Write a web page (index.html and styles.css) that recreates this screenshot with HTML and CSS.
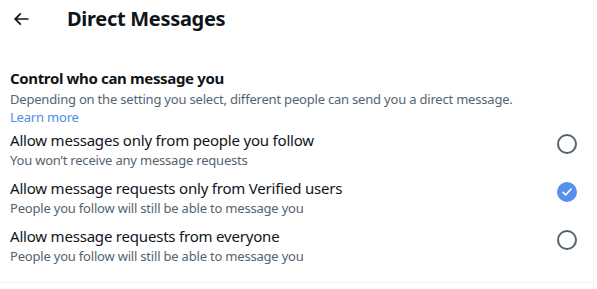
FILE: index.html
```html
<!DOCTYPE html>
<html lang="en">
<head>
<meta charset="utf-8">
<title>Direct Messages</title>
<link rel="stylesheet" href="styles.css">
</head>
<body>
<main class="panel">
  <header class="topbar">
    <button class="back" aria-label="Back">
      <svg viewBox="0 0 24 24" width="20" height="20"><path d="M7.414 13l5.043 5.04-1.414 1.42L3.586 12l7.457-7.46 1.414 1.42L7.414 11H21v2H7.414z"/></svg>
    </button>
    <h1 class="title">Direct Messages</h1>
  </header>
  <section class="section">
    <h2 class="heading">Control who can message you</h2>
    <p class="desc">Depending on the setting you select, different people can send you a direct message.</p>
    <div class="learn"><a class="link" href="#">Learn more</a></div>
    <ul class="options">
      <li class="option">
        <div class="option-text">
          <div class="option-title">Allow messages only from people you follow</div>
          <div class="option-sub">You won’t receive any message requests</div>
        </div>
        <span class="radio"></span>
      </li>
      <li class="option">
        <div class="option-text">
          <div class="option-title">Allow message requests only from Verified users</div>
          <div class="option-sub">People you follow will still be able to message you</div>
        </div>
        <span class="radio checked">
          <svg viewBox="0 0 20 20" width="20" height="20"><path d="M6 10.3l2.6 2.6L14.2 7" fill="none" stroke="#fff" stroke-width="1.6" stroke-linecap="round" stroke-linejoin="round"/></svg>
        </span>
      </li>
      <li class="option">
        <div class="option-text">
          <div class="option-title">Allow message requests from everyone</div>
          <div class="option-sub">People you follow will still be able to message you</div>
        </div>
        <span class="radio"></span>
      </li>
    </ul>
  </section>
</main>
</body>
</html>
```
FILE: styles.css
```css
* { box-sizing: border-box; }
html, body { margin: 0; padding: 0; background: #fff; }
body {
  font-family: "Noto Sans", "Open Sans", "Liberation Sans", sans-serif;
  color: #0f1419;
}
.panel {
  width: 594px;
  height: 289px;
  border-right: 1px solid #eff3f4;
}
.topbar {
  display: flex;
  align-items: center;
  height: 38px;
  padding: 0 0 0 11px;
}
.back {
  display: flex;
  align-items: center;
  justify-content: center;
  width: 20px;
  height: 20px;
  padding: 0;
  border: 0;
  background: none;
  margin-right: 36px;
}
.back svg { fill: #0f1419; }
.title {
  margin: 0;
  font-size: 20px;
  font-weight: 700;
  line-height: 24px;
  letter-spacing: -0.3px;
}
.section {
  padding: 30px 0 14px 10px;
  border-bottom: 1px solid #eff3f4;
}
.heading {
  margin: 0 0 2px;
  font-size: 15px;
  font-weight: 700;
  line-height: 20px;
  letter-spacing: -0.35px;
}
.desc {
  margin: 0;
  font-size: 13px;
  line-height: 18px;
  color: #536471;
  letter-spacing: -0.2px;
}
.learn {
  font-size: 13px;
  line-height: 18px;
  letter-spacing: -0.2px;
}
.link { color: #4a8fea; text-decoration: none; }
.options { list-style: none; margin: -2px 0 0; padding: 0; }
.option {
  display: flex;
  align-items: flex-start;
  justify-content: space-between;
  padding: 4px 16px 4px 0;
}
.option-title {
  font-size: 15px;
  line-height: 24px;
  letter-spacing: -0.2px;
}
.option-sub {
  font-size: 13px;
  line-height: 16px;
  color: #536471;
  letter-spacing: -0.2px;
}
.radio {
  width: 20px;
  height: 20px;
  margin-top: 6px;
  border: 2px solid #536471;
  border-radius: 50%;
  flex: none;
}
.radio.checked {
  border: 0;
  background: #5591ec;
}
.radio.checked svg { display: block; }
```
